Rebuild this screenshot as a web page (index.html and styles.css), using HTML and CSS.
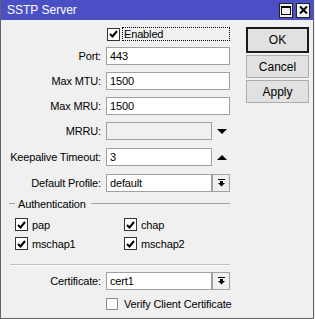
FILE: index.html
```html
<!DOCTYPE html>
<html lang="en">
<head>
    <meta charset="UTF-8">
    <title>SSTP Server</title>
    <link rel="stylesheet" href="styles.css">
</head>
<body>
    <div class="window">
        <div class="titlebar">
            <span class="title">SSTP Server</span>
            <div class="title-buttons">
                <div class="tbtn">
                    <svg width="10" height="9" viewBox="0 0 10 9"><rect x="0.5" y="0.5" width="9" height="8" fill="none" stroke="#000"/><rect x="0" y="0" width="10" height="2" fill="#000"/></svg>
                </div>
                <div class="tbtn">
                    <svg width="9" height="8" viewBox="0 0 9 8"><path d="M1 0.5 L8 7.5 M8 0.5 L1 7.5" stroke="#000" stroke-width="2"/></svg>
                </div>
            </div>
        </div>

        <div class="content">
            <div class="form">
                <div class="row row-enabled">
                    <span class="label"></span>
                    <span class="check checked">
                        <svg width="9" height="8" viewBox="0 0 9 8"><path d="M1 4 L3.5 6.5 L8 1" fill="none" stroke="#000" stroke-width="2"/></svg>
                    </span>
                    <span class="focus-label">Enabled</span>
                </div>
                <div class="row row-first">
                    <span class="label">Port:</span>
                    <div class="input">443</div>
                </div>
                <div class="row">
                    <span class="label">Max MTU:</span>
                    <div class="input">1500</div>
                </div>
                <div class="row">
                    <span class="label">Max MRU:</span>
                    <div class="input">1500</div>
                </div>
                <div class="row">
                    <span class="label">MRRU:</span>
                    <div class="input short disabled"></div>
                    <span class="arrow">
                        <svg width="10" height="5" viewBox="0 0 10 5"><polygon points="0,0 10,0 5,5" fill="#000"/></svg>
                    </span>
                </div>
                <div class="row row-wide">
                    <span class="label">Keepalive Timeout:</span>
                    <div class="input short">3</div>
                    <span class="arrow">
                        <svg width="10" height="5" viewBox="0 0 10 5"><polygon points="0,5 10,5 5,0" fill="#000"/></svg>
                    </span>
                </div>
                <div class="row row-wide">
                    <span class="label">Default Profile:</span>
                    <div class="input short">default</div>
                    <span class="drop">
                        <svg width="7" height="8" viewBox="0 0 7 8"><rect x="0" y="0" width="7" height="1" fill="#000"/><rect x="2" y="2" width="3" height="2" fill="#000"/><polygon points="0,4 7,4 3.5,7.5" fill="#000"/></svg>
                    </span>
                </div>

                <div class="group-title">
                    <span class="line-start"></span>
                    <span>Authentication</span>
                    <span class="line-end"></span>
                </div>
                <div class="checks">
                    <div class="opt">
                        <span class="check checked"><svg width="9" height="8" viewBox="0 0 9 8"><path d="M1 4 L3.5 6.5 L8 1" fill="none" stroke="#000" stroke-width="2"/></svg></span>
                        <span>pap</span>
                    </div>
                    <div class="opt">
                        <span class="check checked"><svg width="9" height="8" viewBox="0 0 9 8"><path d="M1 4 L3.5 6.5 L8 1" fill="none" stroke="#000" stroke-width="2"/></svg></span>
                        <span>chap</span>
                    </div>
                    <div class="opt">
                        <span class="check checked"><svg width="9" height="8" viewBox="0 0 9 8"><path d="M1 4 L3.5 6.5 L8 1" fill="none" stroke="#000" stroke-width="2"/></svg></span>
                        <span>mschap1</span>
                    </div>
                    <div class="opt">
                        <span class="check checked"><svg width="9" height="8" viewBox="0 0 9 8"><path d="M1 4 L3.5 6.5 L8 1" fill="none" stroke="#000" stroke-width="2"/></svg></span>
                        <span>mschap2</span>
                    </div>
                </div>

                <div class="separator"></div>

                <div class="row row-cert">
                    <span class="label">Certificate:</span>
                    <div class="input short">cert1</div>
                    <span class="drop">
                        <svg width="7" height="8" viewBox="0 0 7 8"><rect x="0" y="0" width="7" height="1" fill="#000"/><rect x="2" y="2" width="3" height="2" fill="#000"/><polygon points="0,4 7,4 3.5,7.5" fill="#000"/></svg>
                    </span>
                </div>
                <div class="row row-verify">
                    <span class="label"></span>
                    <span class="check empty"></span>
                    <span class="verify-text">Verify Client Certificate</span>
                </div>
            </div>

            <div class="actions">
                <button class="btn btn-default">OK</button>
                <button class="btn">Cancel</button>
                <button class="btn">Apply</button>
            </div>
        </div>
    </div>
</body>
</html>
```

FILE: styles.css
```css
body {
    margin: 0;
    background: #f0f0f0;
    font-family: "Liberation Sans", Arial, sans-serif;
    font-size: 11px;
    letter-spacing: -0.15px;
    color: #000;
}

.window {
    width: 312px;
    height: 318px;
    border: 1px solid #646464;
    border-top: none;
    background: #f0f0f0;
}

.titlebar {
    height: 20px;
    background: #4b4fc6;
    color: #fff;
    display: flex;
    align-items: center;
    justify-content: space-between;
    padding-left: 6px;
}

.title {
    font-size: 12px;
    letter-spacing: 0;
}

.title-buttons {
    display: flex;
    gap: 3px;
    margin-right: 3px;
}

.tbtn {
    width: 12px;
    height: 13px;
    background: #f0f0f0;
    border: 1px solid #222;
    display: flex;
    align-items: center;
    justify-content: center;
}

.content {
    display: flex;
    padding-top: 7px;
}

.form {
    width: 229px;
    white-space: nowrap;
}

.row {
    display: flex;
    align-items: center;
    height: 18px;
    margin-top: 7px;
}

.row-enabled {
    height: 14px;
    margin-top: 0;
}

.row-first {
    margin-top: 6px;
}

.row-wide {
    margin-top: 8px;
}

.label {
    width: 100px;
    margin-right: 5px;
    text-align: right;
    flex-shrink: 0;
}

.input {
    box-sizing: border-box;
    width: 124px;
    height: 18px;
    border: 1px solid #a0a0a0;
    background: #fff;
    padding-left: 3px;
    line-height: 16px;
}

.input.short {
    width: 106px;
}

.input.disabled {
    background: #f0f0f0;
}

.arrow {
    display: flex;
    margin-left: 5px;
}

.drop {
    box-sizing: border-box;
    width: 18px;
    height: 18px;
    border: 1px solid #a0a0a0;
    background: #f0f0f0;
    display: flex;
    align-items: center;
    justify-content: center;
}

.check {
    box-sizing: border-box;
    width: 13px;
    height: 13px;
    border: 1px solid #333;
    background: #fff;
    display: flex;
    align-items: center;
    justify-content: center;
    flex-shrink: 0;
}

.row-enabled .check {
    margin-left: 1px;
}

.focus-label {
    flex: 1;
    height: 14px;
    line-height: 12px;
    margin-left: 2px;
    padding-left: 1px;
    border: 1px dotted #000;
    box-sizing: border-box;
}

.group-title {
    display: flex;
    align-items: center;
    height: 13px;
    margin-top: 5px;
}

.line-start {
    width: 6px;
    margin-left: 8px;
    margin-right: 3px;
    border-top: 1px solid #a0a0a0;
}

.line-end {
    flex: 1;
    margin-left: 5px;
    border-top: 1px solid #a0a0a0;
}

.checks {
    display: grid;
    grid-template-columns: 109px 1fr;
    row-gap: 6px;
    margin-top: 8px;
    padding-left: 14px;
}

.opt {
    display: flex;
    align-items: center;
    gap: 4px;
    height: 13px;
}

.separator {
    margin: 14px 0 0 9px;
    border-top: 1px solid #c0c0c0;
    border-bottom: 1px solid #fff;
}

.row-cert {
    margin-top: 6px;
}

.row-verify {
    height: 12px;
    margin-top: 8px;
}

.check.empty {
    width: 12px;
    height: 12px;
    border-color: #8c8c8c;
}

.verify-text {
    margin-left: 6px;
}

.actions {
    display: flex;
    flex-direction: column;
    gap: 2px;
    margin-left: 16px;
}

.btn {
    width: 63px;
    height: 23px;
    padding: 0;
    font-family: "Liberation Sans", Arial, sans-serif;
    font-size: 12px;
    color: #000;
    background: #e1e1e1;
    border: 1px solid #adadad;
}

.btn-default {
    height: 26px;
    border: 2px solid #1a1a1a;
}
```
